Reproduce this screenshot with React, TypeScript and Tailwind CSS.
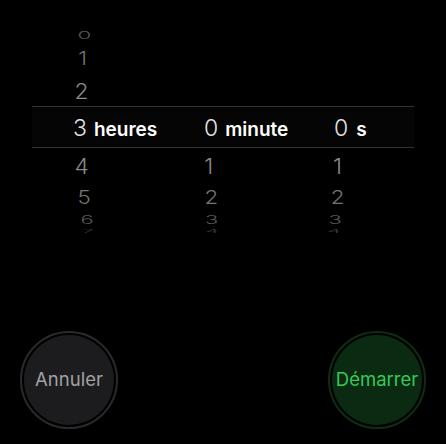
const hours = "0 1 2".split(" ");

type Row = {
  h: string;
  m: string;
  s: string;
  box: string;
  look: string;
};

// rows of the wheel below the selected band, squashed as they roll away
const below: Row[] = [
  { h: "4", m: "1", s: "1", box: "h-[36px]", look: "scale-x-[0.99] scale-y-[0.95] text-[#8a8a8a]" },
  { h: "5", m: "2", s: "2", box: "h-[27px]", look: "scale-x-[0.97] scale-y-[0.8] text-[#747474]" },
  { h: "6", m: "3", s: "3", box: "h-[18px]", look: "scale-x-[0.95] scale-y-[0.5] text-[#585858]" },
  { h: "7", m: "4", s: "4", box: "h-[4px]", look: "scale-x-[0.94] scale-y-[0.2] text-[#3a3a3a]" },
];

const above = [
  { v: hours[0], box: "h-[12px]", look: "scale-x-[0.97] scale-y-[0.45] text-[#585858]" },
  { v: hours[1], box: "h-[35px]", look: "scale-x-[0.965] scale-y-[0.82] text-[#747474]" },
  { v: hours[2], box: "h-[30px]", look: "scale-x-[0.99] scale-y-[0.95] text-[#8a8a8a]" },
];

export default function App() {
  return (
    <div
      className="flex h-[444px] w-[446px] flex-col overflow-hidden bg-black"
      style={{ fontFamily: "Inter, 'Noto Sans', sans-serif" }}
    >
      <div className="pt-[29px]">
        {above.map((row) => (
          <div key={row.v} className={`flex items-center ${row.box}`}>
            <div className={`flex w-full items-center pl-[73px] text-[23px] font-light leading-none ${row.look}`}>
              <div className="w-[131px]">{row.v}</div>
            </div>
          </div>
        ))}

        <div className="mx-[32px] border-y border-[#333333] bg-[#050505]">
          <div className="flex h-[40px] items-center pt-[3px] pl-[41px]">
            <div className="flex w-[131px] items-baseline">
              <span className="text-[23px] font-light leading-none text-[#e2e2e2]">3</span>
              <span className="ml-[7px] text-[19px] font-semibold leading-none text-white">heures</span>
            </div>
            <div className="flex w-[130px] items-baseline">
              <span className="text-[23px] font-light leading-none text-[#e2e2e2]">0</span>
              <span className="ml-[7px] text-[19px] font-semibold leading-none text-white">minute</span>
            </div>
            <div className="flex items-baseline">
              <span className="text-[23px] font-light leading-none text-[#e2e2e2]">0</span>
              <span className="ml-[8px] text-[19px] font-semibold leading-none text-white">s</span>
            </div>
          </div>
        </div>

        {below.map((row) => (
          <div key={row.h} className={`flex items-center ${row.box}`}>
            <div className={`flex w-full items-center pl-[73px] text-[23px] font-light leading-none ${row.look}`}>
              <div className="w-[131px]">{row.h}</div>
              <div className="w-[130px]">{row.m}</div>
              <div>{row.s}</div>
            </div>
          </div>
        ))}
      </div>

      <div className="mt-[98px] flex justify-between px-[20px]">
        <button className="h-[98px] w-[98px] rounded-full border-2 border-[#2a2a2c] bg-black p-[2px]">
          <div className="flex h-full w-full items-center justify-center rounded-full bg-[#1c1c1e] text-[18.5px] text-[#a0a0a5]">
            Annuler
          </div>
        </button>
        <button className="h-[98px] w-[98px] rounded-full border-2 border-[#0c2e15] bg-black p-[2px]">
          <div className="flex h-full w-full items-center justify-center rounded-full bg-[#0a2a12] text-[18.5px] text-[#36c95c]">
            Démarrer
          </div>
        </button>
      </div>
    </div>
  );
}
